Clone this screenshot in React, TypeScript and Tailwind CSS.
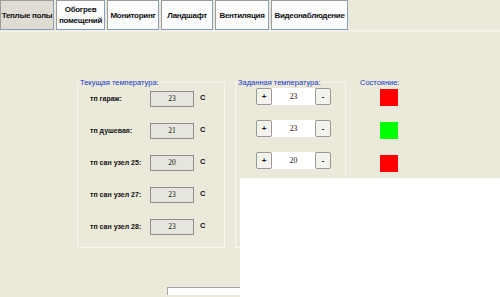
import React from "react";

const tabs = [
  { label: "Теплые полы", w: "w-[54px]", active: true },
  { label: "Обогрев помещений", w: "w-[49px]", two: true },
  { label: "Мониторинг", w: "w-[52px]" },
  { label: "Ландшафт", w: "w-[52px]" },
  { label: "Вентиляция", w: "w-[54px]" },
  { label: "Видеонаблюдение", w: "w-[77px]" },
];

const current = [
  { name: "тп гараж:", v: "23" },
  { name: "тп душевая:", v: "21" },
  { name: "тп сан узел 25:", v: "20" },
  { name: "тп сан узел 27:", v: "23" },
  { name: "тп сан узел 28:", v: "23" },
];

const setT = ["23", "23", "20", "23", "23"];
const states = ["bg-[#ff0000]", "bg-[#00ff00]", "bg-[#ff0000]", "bg-[#ff0000]", "bg-[#ff0000]"];

export default function App() {
  return (
    <div
      className="relative w-[500px] h-[297px] overflow-hidden bg-[#ebe9da]"
      style={{ fontFamily: '"Liberation Sans", Arial, sans-serif' }}
    >
      {/* tabs */}
      <div className="flex h-[30px] gap-[2px]">
        {tabs.map((t) => (
          <div
            key={t.label}
            className={`${t.w} h-[30px] flex items-center justify-center text-center whitespace-nowrap leading-[11px] text-[8px] tracking-[-0.3px] font-bold text-[#111] border border-[#9c9c9c] border-b-[#7f9db9] border-r-[#8aa0c0] ${
              t.active ? "bg-[#dedcd3]" : "bg-[#fcfcfe]"
            }`}
          >
            {t.two ? (
              <span>
                Обогрев
                <br />
                помещений
              </span>
            ) : (
              t.label
            )}
          </div>
        ))}
      </div>
      <div className="h-[2px] bg-[#f2f0e6]" />

      {/* main */}
      <div className="flex pt-[46px] pl-[77px]">
        {/* current */}
        <fieldset className="w-[148px] h-[170px] border border-[#f6f5ef]">
          <legend className="ml-[2px] text-[7.5px] leading-[9px] text-[#1536c8]">
            Текущая температура:
          </legend>
          <div className="flex flex-col gap-[16px] pt-[4px]">
            {current.map((r) => (
              <div key={r.name} className="flex items-center h-[16px]">
                <span className="w-[72px] pl-[12px] text-[7px] font-bold text-[#111] whitespace-nowrap">
                  {r.name}
                </span>
                <div
                  className="w-[44px] h-[16px] border border-[#8e8e8e] bg-[#e6e5de] flex items-center justify-center text-[7.5px] text-[#111]"
                  style={{ fontFamily: '"Liberation Serif", serif' }}
                >
                  {r.v}
                </div>
                <span className="ml-[6px] -mt-[3px] text-[7.5px] font-bold text-[#111]">C</span>
              </div>
            ))}
          </div>
        </fieldset>

        {/* set */}
        <fieldset className="ml-[10px] w-[111px] h-[170px] border border-[#f6f5ef]">
          <legend className="ml-[2px] text-[7.5px] leading-[9px] text-[#1536c8]">
            Заданная температура:
          </legend>
          <div className="flex flex-col gap-[15px] pt-[1px] pl-[20px]">
            {setT.map((v, i) => (
              <div key={i} className="flex h-[17px]">
                <div className="w-[16px] h-[17px] border border-[#9a9a9a] rounded-[2px] bg-[#f3f3ee] flex items-center justify-center text-[8px] font-bold text-[#111]">
                  +
                </div>
                <div
                  className="w-[43px] h-[17px] bg-white flex items-center justify-center text-[7.5px] text-[#111]"
                  style={{ fontFamily: '"Liberation Serif", serif' }}
                >
                  {v}
                </div>
                <div className="w-[16px] h-[17px] border border-[#9a9a9a] rounded-[2px] bg-[#f3f3ee] flex items-center justify-center text-[8px] font-bold text-[#111]">
                  -
                </div>
              </div>
            ))}
          </div>
        </fieldset>

        {/* state */}
        <div className="ml-[10px] w-[60px]">
          <div className="ml-[4px] text-[7.5px] leading-[9px] text-[#1536c8]">Состояние:</div>
          <div className="flex flex-col gap-[16px] pt-[2px] pl-[24px]">
            {states.map((c, i) => (
              <div key={i} className={`w-[18px] h-[17px] ${c}`} />
            ))}
          </div>
        </div>
      </div>

      {/* bottom bar */}
      <div className="mt-[39px] ml-[167px] w-[120px] h-[8px] border-t border-l border-[#a5a5a5] bg-white" />

      {/* white overlay */}
      <div className="absolute left-[240px] top-[178px] w-[260px] h-[119px] bg-white" />
    </div>
  );
}
